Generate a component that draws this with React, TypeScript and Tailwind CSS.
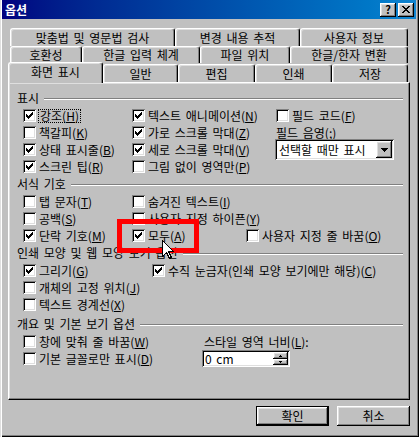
import React from "react";

// Win9x bevels
const raised =
  "shadow-[inset_-1px_-1px_0_#000000,inset_1px_1px_0_#ffffff,inset_-2px_-2px_0_#808080,inset_2px_2px_0_#dfdfdf]";
const sunken =
  "shadow-[inset_1px_1px_0_#808080,inset_-1px_-1px_0_#ffffff,inset_2px_2px_0_#000000,inset_-2px_-2px_0_#dfdfdf]";

const M = ({ c }: { c: string }) => <span className="underline underline-offset-[1px]">{c}</span>;

function Box({ on }: { on?: boolean }) {
  return (
    <span className={`flex h-[13px] w-[13px] shrink-0 items-center justify-center bg-white ${sunken}`}>
      {on && (
        <svg width="7" height="7" viewBox="0 0 7 7" shapeRendering="crispEdges">
          <path
            d="M6 0h1v1h-1z M5 1h2v1h-2z M0 2h1v1H0z M4 2h3v1h-3z M0 3h2v1H0z M3 3h3v1h-3z M0 4h5v1H0z M1 5h3v1H1z M2 6h1v1H2z"
            fill="#000"
          />
        </svg>
      )}
    </span>
  );
}

function Check({ on, focus, children }: { on?: boolean; focus?: boolean; children: React.ReactNode }) {
  return (
    <div className="flex h-[17px] items-center gap-[3px] whitespace-nowrap">
      <Box on={on} />
      <span className={focus ? "px-[1px] outline-1 outline-dotted outline-black" : ""}>{children}</span>
    </div>
  );
}

function Group({ title, className }: { title: string; className?: string }) {
  return (
    <div className={`flex h-[18px] items-center pl-[8px] pr-[6px] ${className ?? ""}`}>
      <span className="whitespace-nowrap">{title}</span>
      <div className="ml-[5px] mt-[2px] h-[2px] flex-1 border-t border-b border-t-[#808080] border-b-white" />
    </div>
  );
}

function Tab({ children, className, active }: { children: React.ReactNode; className: string; active?: boolean }) {
  return (
    <div
      className={`flex shrink-0 items-center justify-center rounded-t-[3px] border-t border-l border-r border-white border-r-black bg-[#c0c0c0] shadow-[inset_-1px_0_0_#808080,inset_1px_1px_0_#dfdfdf] whitespace-nowrap ${
        active ? "relative z-10 -mb-[1px] pb-[2px]" : ""
      } ${className}`}
    >
      {children}
    </div>
  );
}

function Down() {
  return (
    <svg width="7" height="4" viewBox="0 0 7 4" shapeRendering="crispEdges">
      <path d="M0 0h7v1H0z M1 1h5v1H1z M2 2h3v1H2z M3 3h1v1H3z" fill="#000" />
    </svg>
  );
}

export default function App() {
  return (
    <div
      className={`relative h-[437px] w-[419px] overflow-hidden bg-[#c0c0c0] pl-[2px] pr-[3px] pb-[2px] font-['Noto_Sans_CJK_KR',sans-serif] text-[12px] leading-none text-black [word-spacing:2px] shadow-[inset_1px_0_0_#dfdfdf,inset_2px_0_0_#ffffff,inset_-1px_-1px_0_#000000,inset_-2px_-2px_0_#808080]`}
    >
      {/* title bar */}
      <div className="flex h-[19px] items-center bg-linear-to-r from-[#000080] to-[#1084d0] pl-[3px] pr-[2px]">
        <span className="font-bold text-white">옵션</span>
        <div className="ml-auto flex gap-[2px]">
          <div className={`flex h-[14px] w-[16px] items-center justify-center bg-[#c0c0c0] text-[11px] font-bold ${raised}`}>
            ?
          </div>
          <div className={`flex h-[14px] w-[16px] items-center justify-center bg-[#c0c0c0] ${raised}`}>
            <svg width="8" height="7" viewBox="0 0 8 7" shapeRendering="crispEdges">
              <path
                d="M0 0h2v1H0z M6 0h2v1H6z M1 1h2v1H1z M5 1h2v1H5z M2 2h4v1H2z M3 3h2v1H3z M2 4h4v1H2z M1 5h2v1H1z M5 5h2v1H5z M0 6h2v1H0z M6 6h2v1H6z"
                fill="#000"
              />
            </svg>
          </div>
        </div>
      </div>

      {/* tabs */}
      <div className="mt-[9px] flex h-[18px] pl-[8px]">
        <Tab className="w-[165px]">맞춤법 및 영문법 검사</Tab>
        <Tab className="w-[125px]">변경 내용 추적</Tab>
        <Tab className="w-[108px]">사용자 정보</Tab>
      </div>
      <div className="flex h-[17px] pl-[8px]">
        <Tab className="w-[72px]">호환성</Tab>
        <Tab className="w-[118px]">한글 입력 체계</Tab>
        <Tab className="w-[90px]">파일 위치</Tab>
        <Tab className="w-[118px]">한글/한자 변환</Tab>
      </div>
      <div className="-mt-[1px] flex h-[20px] items-end pl-[6px]">
        <Tab active className="h-[21px] w-[95px]">
          화면 표시
        </Tab>
        <Tab className="h-[18px] w-[75px]">일반</Tab>
        <Tab className="h-[18px] w-[77px]">편집</Tab>
        <Tab className="h-[18px] w-[77px]">인쇄</Tab>
        <Tab className="h-[18px] w-[76px]">저장</Tab>
      </div>

      {/* panel */}
      <div className="ml-[6px] h-[318px] w-[402px] border border-white border-r-black border-b-black pt-[6px] shadow-[inset_-1px_-1px_0_#808080,inset_1px_1px_0_#dfdfdf]">
        <Group title="표시" />
        <div className="grid grid-cols-[109px_144px_1fr] pl-[14px]">
          <Check on focus>
            강조(<M c="H" />)
          </Check>
          <Check on>
            텍스트 애니메이션(<M c="N" />)
          </Check>
          <Check>
            필드 코드(<M c="F" />)
          </Check>
          <Check>
            책갈피(<M c="K" />)
          </Check>
          <Check on>
            가로 스크롤 막대(<M c="Z" />)
          </Check>
          <div className="flex h-[17px] items-center">
            필드 음영(<M c=";" />)
          </div>
          <Check on>
            상태 표시줄(<M c="B" />)
          </Check>
          <Check on>
            세로 스크롤 막대(<M c="V" />)
          </Check>
          <div className="flex h-[17px] items-center">
            <div className={`-ml-[1px] flex h-[21px] w-[119px] items-center bg-white p-[2px] ${sunken}`}>
              <span className="flex-1 pl-[2px] whitespace-nowrap">선택할 때만 표시</span>
              <div className={`flex h-[17px] w-[16px] items-center justify-center bg-[#c0c0c0] ${raised}`}>
                <Down />
              </div>
            </div>
          </div>
          <Check on>
            스크린 팁(<M c="R" />)
          </Check>
          <Check>
            그림 없이 영역만(<M c="P" />)
          </Check>
          <div />
        </div>

        <Group title="서식 기호" />
        <div className="grid grid-cols-[109px_114px_1fr] pl-[14px]">
          <Check>
            탭 문자(<M c="T" />)
          </Check>
          <Check>
            숨겨진 텍스트(<M c="I" />)
          </Check>
          <div />
          <Check>
            공백(<M c="S" />)
          </Check>
          <Check>
            사용자 지정 하이픈(<M c="Y" />)
          </Check>
          <div />
          <Check on>
            단락 기호(<M c="M" />)
          </Check>
          <Check on>
            모두(<M c="A" />)
          </Check>
          <Check>
            사용자 지정 줄 바꿈(<M c="O" />)
          </Check>
        </div>

        <Group title="인쇄 모양 및 웹 모양 보기 옵션" />
        <div className="grid grid-cols-[129px_1fr] pl-[14px]">
          <Check on>
            그리기(<M c="G" />)
          </Check>
          <Check on>
            수직 눈금자(인쇄 모양 보기에만 해당)(<M c="C" />)
          </Check>
          <Check>
            개체의 고정 위치(<M c="J" />)
          </Check>
          <div />
          <Check>
            텍스트 경계선(<M c="X" />)
          </Check>
          <div />
        </div>

        <Group title="개요 및 기본 보기 옵션" className="mt-[2px]" />
        <div className="grid grid-cols-[179px_1fr] pl-[14px]">
          <Check>
            창에 맞춰 줄 바꿈(<M c="W" />)
          </Check>
          <div className="flex h-[17px] items-center pl-[2px] whitespace-nowrap">
            스타일 영역 너비(<M c="L" />):
          </div>
          <Check>
            기본 글꼴로만 표시(<M c="D" />)
          </Check>
          <div className="flex h-[17px] items-center">
            <div className={`flex h-[17px] w-[88px] items-center bg-white p-[2px] ${sunken}`}>
              <span className="flex-1 pl-[1px]">0 cm</span>
              <div className="flex h-[13px] w-[15px] flex-col">
                <div className={`flex h-[7px] items-center justify-center bg-[#c0c0c0] ${raised}`}>
                  <svg width="3" height="2" viewBox="0 0 3 2" shapeRendering="crispEdges">
                    <path d="M1 0h1v1H1z M0 1h3v1H0z" fill="#000" />
                  </svg>
                </div>
                <div className={`flex h-[6px] items-center justify-center bg-[#c0c0c0] ${raised}`}>
                  <svg width="3" height="2" viewBox="0 0 3 2" shapeRendering="crispEdges">
                    <path d="M0 0h3v1H0z M1 1h1v1H1z" fill="#000" />
                  </svg>
                </div>
              </div>
            </div>
          </div>
        </div>
      </div>

      {/* buttons */}
      <div className="mt-[6px] flex justify-end gap-[8px] pr-[6px]">
        <button className="h-[20px] w-[73px] border border-black bg-[#c0c0c0] p-0">
          <div className={`flex h-full w-full items-center justify-center ${raised}`}>확인</div>
        </button>
        <button className={`flex h-[20px] w-[73px] items-center justify-center bg-[#c0c0c0] ${raised}`}>취소</button>
      </div>

      {/* highlight overlay */}
      <div className="pointer-events-none absolute top-[219px] left-[117px] h-[34px] w-[82px] border-[5px] border-[#ff0000]" />
      <svg
        className="pointer-events-none absolute top-[240px] left-[162px]"
        width="12"
        height="20"
        viewBox="0 0 12 20"
        shapeRendering="crispEdges"
      >
        <path d="M0.5 0.5 V16.5 L4.5 12.5 L7.5 18.5 L9.5 17.5 L6.5 11.5 H11.5 Z" fill="#fff" stroke="#000" strokeWidth="1" />
      </svg>
    </div>
  );
}
